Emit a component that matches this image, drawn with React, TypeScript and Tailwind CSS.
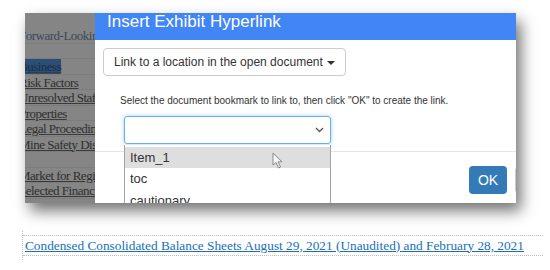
const docRows = [
  { t: "Forward-Looking", blank: false },
  { t: "", blank: true },
  { t: "Business", sel: true },
  { t: "Risk Factors" },
  { t: "Unresolved Staff" },
  { t: "Properties" },
  { t: "Legal Proceeding" },
  { t: "Mine Safety Disc" },
  { t: "", blank: true },
  { t: "Market for Regis" },
  { t: "Selected Financi" },
  { t: "Management's D" },
];

function Cursor() {
  return (
    <svg width="12" height="17" viewBox="0 0 12 17" className="absolute left-[247px] top-[139px]">
      <path d="M1 1 L1 13 L4 10.5 L6.5 16 L8.5 15 L6 9.8 L10 9.8 Z" fill="#f4f4f4" stroke="#8a8a8a" strokeWidth="1" strokeLinejoin="round" />
    </svg>
  );
}

export default function App() {
  return (
    <div className="h-[270px] w-[550px] bg-white overflow-hidden">
      <div className="ml-[25px] mt-[13px] h-[190px] w-[491px] shadow-[5px_8px_14px_rgba(0,0,0,0.55)]">
        <div className="relative flex h-full w-full overflow-hidden">
          {/* document behind the overlay */}
          <div className="w-[70px] shrink-0 overflow-hidden bg-[#858585] pt-[15px]">
            <div className="-ml-[6px] w-[110px] font-['Liberation_Serif',serif] text-[13px] leading-[15px] tracking-[-0.5px] text-[#2e2e2e]">
              {docRows.map((r, i) => (
                <div key={i} className="h-[15.5px] border-b border-[#7c7c7c] whitespace-nowrap">
                  {r.blank ? null : r.sel ? (
                    <span className="bg-[#2c4f78] text-[#1c2c40] underline decoration-[#3a3a3a]">{r.t}</span>
                  ) : i === 0 ? (
                    <span className="text-[#3a4a5a]">{r.t}</span>
                  ) : (
                    <span className="underline decoration-[#3a3a3a]">{r.t}</span>
                  )}
                </div>
              ))}
            </div>
          </div>

          {/* modal */}
          <div className="w-[440px] shrink-0 bg-white font-['Liberation_Sans',Arial,sans-serif]">
            <div className="h-[27px] overflow-hidden bg-[#4285f4] pl-[12px]">
              <div className="-mt-[3px] text-[17px] leading-[24px] text-white">Insert Exhibit Hyperlink</div>
            </div>
            <div className="h-[112px] border-b border-[#e5e5e5] pl-[8px] pt-[8px]">
              <div className="flex h-[28px] w-fit items-center whitespace-nowrap rounded-[4px] border border-[#cccccc] px-[10px] text-[12px] text-[#333]">
                Link to a location in the open document
                <span className="ml-[4px] mt-[1px] h-0 w-0 border-x-[4px] border-t-[4px] border-x-transparent border-t-[#333]" />
              </div>
              <div className="mt-[18px] pl-[17px] text-[10px] leading-[13px] text-[#333]">
                Select the document bookmark to link to, then click "OK" to create the link.
              </div>
              <div className="ml-[21px] mt-[9px] flex h-[28px] w-[207px] items-center justify-end rounded-[3px] border border-[#66afe9] pr-[6px] shadow-[0_0_4px_rgba(102,175,233,0.6)]">
                <svg width="9" height="6" viewBox="0 0 9 6">
                  <path d="M1 1 L4.5 4.5 L8 1" fill="none" stroke="#555" strokeWidth="1.3" />
                </svg>
              </div>
            </div>
            <div className="flex justify-end pt-[14px]">
              <div className="flex h-[28px] w-[38px] items-center justify-center rounded-[4px] bg-[#337ab7] text-[14px] text-white">OK</div>
              <div className="ml-[8px] h-[28px] w-[20px] shrink-0 rounded-[4px] border border-[#cccccc]" />
            </div>
          </div>

          {/* open dropdown list */}
          <div className="absolute left-[99px] top-[132px] w-[207px] border-x border-[#a5a5a5] bg-white font-['Liberation_Sans',Arial,sans-serif] text-[13px] text-[#333]">
            <div className="mt-[2px] flex h-[21px] items-center bg-[#dedede] pl-[5px]">Item_1</div>
            <div className="flex h-[22px] items-center pl-[5px]">toc</div>
            <div className="flex h-[22px] items-center pl-[5px]">cautionary</div>
          </div>
          <Cursor />
        </div>
      </div>

      <div className="ml-[22px] mt-[28px] w-[521px] border-l border-dotted border-[#bdbdbd] py-[4px]">
        <div className="flex h-[21px] items-center border-y border-dotted border-[#bdbdbd] pl-[2px] font-['Liberation_Serif',serif] text-[13.3px] text-[#1a6fb5]">
          <span className="whitespace-nowrap underline">
            Condensed Consolidated Balance Sheets August 29, 2021 (Unaudited) and February 28, 2021
          </span>
        </div>
      </div>
    </div>
  );
}
